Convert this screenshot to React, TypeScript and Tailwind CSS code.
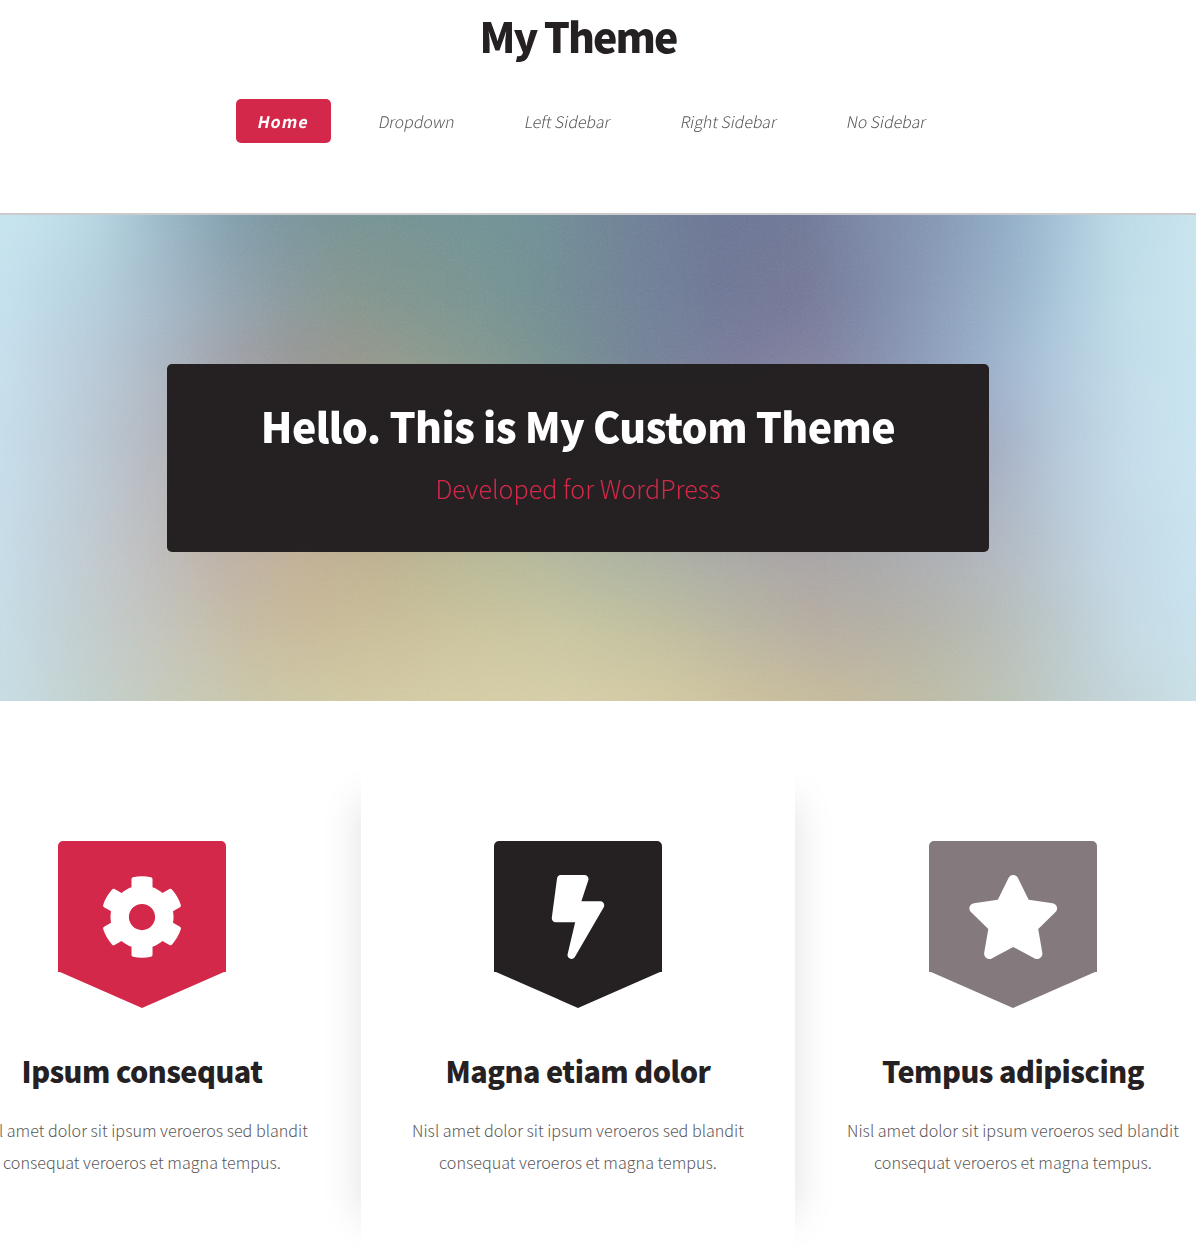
import type { ReactNode } from "react";
import { FaBolt, FaCog, FaStar } from "react-icons/fa";

const navItems = ["Dropdown", "Left Sidebar", "Right Sidebar", "No Sidebar"];

const features: { title: string; tone: string; width: string; icon: ReactNode }[] = [
  { title: "Ipsum consequat", tone: "text-[#d4284a]", width: "w-[438px]", icon: <FaCog className="h-[84px] w-[84px]" /> },
  { title: "Magna etiam dolor", tone: "text-[#252122]", width: "relative z-10 w-[434px]", icon: <FaBolt className="-ml-px h-[84px] w-[84px]" /> },
  { title: "Tempus adipiscing", tone: "text-[#847a7d]", width: "w-[436px]", icon: <FaStar className="h-[84px] w-[94.5px]" /> },
];

type Stop = [number, string];

/* Colour rows of the hero backdrop; neighbouring rows are blended vertically. */
const rows: { y: number; stops: Stop[] }[] = [
  { y: 0, stops: [[0, "#c6e4ee"], [50, "#c0deea"], [100, "#b4d3e0"], [170, "#98b5c5"], [230, "#829fae"], [280, "#7a969f"], [340, "#769394"], [410, "#749292"], [480, "#729294"], [540, "#708f96"], [620, "#6f8296"], [720, "#6c7695"], [800, "#6f7896"], [860, "#7a86a5"], [940, "#8498b4"], [1010, "#92adc7"], [1060, "#a4c1d5"], [1110, "#b8d7e5"], [1196, "#c8e4ee"]] },
  { y: 85, stops: [[0, "#c4e1ee"], [100, "#b3cddc"], [170, "#a2b6c6"], [230, "#93a4af"], [290, "#8a999c"], [350, "#86968f"], [410, "#7f958f"], [480, "#789492"], [540, "#738f93"], [620, "#718497"], [720, "#6f7896"], [800, "#757896"], [860, "#7b85a4"], [940, "#8b9db9"], [1020, "#9bb6cd"], [1080, "#b1cedf"], [1130, "#c0dde9"], [1196, "#c8e4ee"]] },
  { y: 145, stops: [[0, "#c6dfec"], [100, "#b7c8d6"], [170, "#a9b3bf"], [230, "#9fa1a8"], [290, "#979797"], [350, "#95968c"], [410, "#8f998c"], [480, "#83978f"], [560, "#759090"], [640, "#738297"], [740, "#797b9a"], [820, "#80829f"], [900, "#8795b3"], [980, "#97adc8"], [1060, "#b0c9dc"], [1130, "#c1dce9"], [1196, "#c7e4ee"]] },
  { y: 235, stops: [[0, "#c5deea"], [80, "#bccbd7"], [160, "#b3b6bd"], [330, "#a89c8a"], [500, "#a0a492"], [740, "#8b8796"], [900, "#9298b0"], [1000, "#a5afc4"], [1060, "#b4c8da"], [1130, "#c4dcea"], [1196, "#c8e4ef"]] },
  { y: 345, stops: [[0, "#c6dce8"], [50, "#c2d1da"], [100, "#c0c8cd"], [160, "#bebcba"], [230, "#bdb1a4"], [300, "#c1b095"], [380, "#beb190"], [450, "#b9b794"], [540, "#b6b89b"], [620, "#adb4a0"], [720, "#aaaba5"], [800, "#a9a4a4"], [870, "#a8a8a9"], [960, "#aeb2b7"], [1030, "#b5bfc8"], [1100, "#c0d4e1"], [1196, "#c7e3ef"]] },
  { y: 415, stops: [[0, "#c6dce5"], [80, "#c1cdcf"], [160, "#c3c3bb"], [240, "#c5bba3"], [310, "#c8ba99"], [400, "#c9bf99"], [480, "#cac49d"], [560, "#c8c5a0"], [660, "#c0be9e"], [740, "#b9b5a0"], [820, "#b5ada1"], [900, "#b4b0a5"], [980, "#b5b9b1"], [1060, "#bbc8cb"], [1130, "#c4dae4"], [1196, "#c8e1ec"]] },
  { y: 486, stops: [[0, "#c6dde3"], [80, "#c2d1d0"], [160, "#c5cabb"], [250, "#cac6a8"], [340, "#d0c8a2"], [450, "#d4cca4"], [560, "#d5cea7"], [660, "#d2c9a2"], [760, "#cabf9c"], [840, "#c4ba9c"], [920, "#bebba4"], [1000, "#bbc2b5"], [1080, "#bfced0"], [1196, "#c8e0e7"]] },
];

/* The backdrop bleeds past the hero so that its blur has no pale rim. */
const BLEED = 24;

const toGradient = (stops: Stop[]) =>
  `linear-gradient(to right, ${stops.map(([x, c]) => `${c} ${x + BLEED}px`).join(", ")})`;

function HeroBackdrop() {
  return (
    <div className="absolute inset-0 overflow-hidden">
      <div className="absolute -inset-6 flex flex-col blur-[10px]">
        <div className="h-6 shrink-0" style={{ backgroundImage: toGradient(rows[0].stops) }} />
        {rows.slice(0, -1).map((row, i) => (
          <div
            key={row.y}
            className="relative w-full shrink-0"
            style={{ height: rows[i + 1].y - row.y, backgroundImage: toGradient(rows[i + 1].stops) }}
          >
            <div
              className="absolute inset-0 [mask-image:linear-gradient(to_bottom,black,transparent)]"
              style={{ backgroundImage: toGradient(row.stops) }}
            />
          </div>
        ))}
        <div className="h-6 shrink-0" style={{ backgroundImage: toGradient(rows[rows.length - 1].stops) }} />
      </div>
      <svg className="absolute inset-0 h-full w-full opacity-25 mix-blend-soft-light">
        <filter id="grain">
          <feTurbulence type="fractalNoise" baseFrequency="0.45" numOctaves="2" />
          <feColorMatrix type="saturate" values="0" />
        </filter>
        <rect width="100%" height="100%" filter="url(#grain)" />
      </svg>
    </div>
  );
}

function Badge({ tone, icon }: { tone: string; icon: ReactNode }) {
  return (
    <div className={`relative h-[167px] w-[168px] ${tone}`}>
      <svg viewBox="0 0 168 167" className="block h-full w-full" fill="currentColor">
        <path d="M5 0H163A5 5 0 0 1 168 5V131H166L84 167L2 131H0V5A5 5 0 0 1 5 0Z" />
      </svg>
      <div className="absolute inset-x-0 top-[33.5px] flex justify-center text-white">{icon}</div>
    </div>
  );
}

export default function App() {
  return (
    <div className="h-[1256px] w-full overflow-hidden bg-white font-['Noto_Sans_CJK_SC',sans-serif] text-[#5b5758]">
      <header className="h-[215px] border-b-2 border-[#cccaca] pt-[5px]">
        <div className="flex w-[1156px] flex-col items-center">
          <h1 className="text-[41px] leading-[61px] font-black tracking-[-1.95px] text-[#252122]">My Theme</h1>
          <nav className="mt-[33px] flex w-[684px] gap-[26px] text-[16px] leading-[44px] font-light whitespace-nowrap">
            <a className="w-[95px] shrink-0 rounded-[5px] bg-[#d4284a] text-center font-bold text-white">
              <span className="inline-block -skew-x-[11deg] tracking-[1.1px]">Home</span>
            </a>
            {navItems.map((item) => (
              <a key={item} className="px-[22px]">
                <span className="inline-block -skew-x-[11deg] tracking-[-0.05px]">{item}</span>
              </a>
            ))}
          </nav>
        </div>
      </header>

      <section className="relative h-[486px]">
        <HeroBackdrop />
        <div className="relative flex w-[1156px] justify-center pt-[149px]">
          <div className="h-[188px] w-[822px] rounded-[5px] bg-[#231f20]/99 pt-[31px] text-center">
            <h2 className="text-[41px] leading-[61px] font-black tracking-[-0.6px] text-white">
              Hello. This is My Custom Theme
            </h2>
            <p className="mt-[12px] text-[25.15px] leading-[40px] font-light text-[#d4284a]">Developed for WordPress</p>
          </div>
        </div>
      </section>

      <section className="-ml-[77px] flex w-[1308px]">
        {features.map((f, i) => (
          <article key={f.title} className={`shrink-0 ${f.width}`}>
            {i === 1 && (
              <div className="absolute inset-x-0 top-[100px] h-[416px] shadow-[0_0_38px_rgba(0,0,0,0.125)]" />
            )}
            <div className="relative flex h-[555px] flex-col items-center bg-white pt-[140px] text-center">
              <Badge tone={f.tone} icon={f.icon} />
              <h3 className="mt-[42px] text-[28.8px] leading-[41px] font-black tracking-[-0.5px] text-[#252122]">
                {f.title}
              </h3>
              <p className="mt-[23px] text-[16.15px] leading-[32px] font-light">
                Nisl amet dolor sit ipsum veroeros sed blandit
                <br />
                consequat veroeros et magna tempus.
              </p>
            </div>
          </article>
        ))}
      </section>
    </div>
  );
}
